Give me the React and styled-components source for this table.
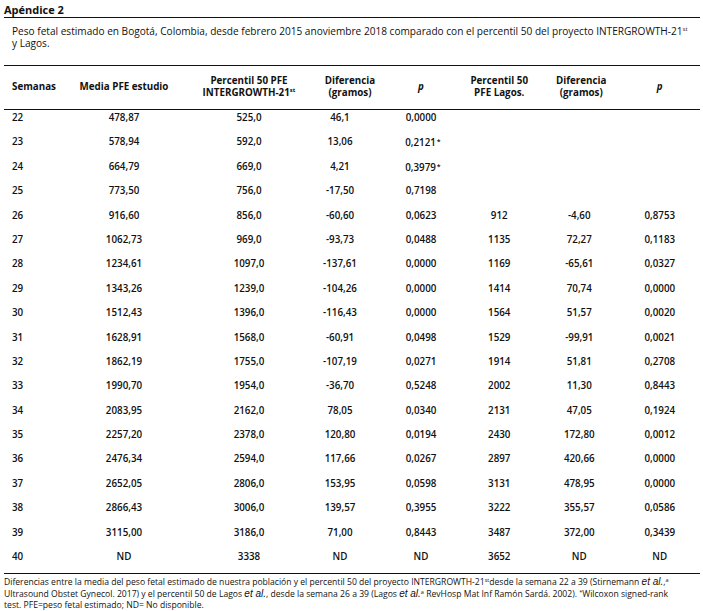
import styled, { createGlobalStyle } from 'styled-components'

const GlobalStyle = createGlobalStyle`
  body {
    margin: 0;
    background: #fff;
    font-family: "Open Sans", "Liberation Sans", sans-serif;
    color: #111;
  }
`

const COLS = '45.5px 149px 101px 83px 77px 79.5px 80.5px 80.5px'

const Page = styled.div`
  width: 696px;
  margin-left: 4px;
`

const Title = styled.h2`
  margin: 0;
  padding-top: 3px;
  font-size: 11px;
  line-height: 14px;
  font-weight: 700;
  border-bottom: 1.5px solid #111;
`

const Caption = styled.p`
  margin: 7px 0 15.5px 8px;
  font-size: 10.1px;
  line-height: 12px;
  font-weight: 500;

  sup {
    font-size: 6px;
    vertical-align: 4px;
    line-height: 0;
  }
`

const Table = styled.div`
  border-top: 1.5px solid #111;
  border-bottom: 1.5px solid #111;
`

const HeadRow = styled.div`
  display: grid;
  grid-template-columns: ${COLS};
  align-items: center;
  height: 43.5px;
  border-bottom: 1.5px solid #111;
`

const HeadCell = styled.div`
  font-size: 9.8px;
  line-height: 12px;
  font-weight: 700;
  white-space: nowrap;
  text-align: ${p => (p.$left ? 'left' : 'center')};
  padding-left: ${p => (p.$left ? 8 : p.$shift > 0 ? p.$shift * 2 : 0)}px;
  font-style: ${p => (p.$italic ? 'italic' : 'normal')};

  sup {
    font-size: 6px;
    vertical-align: 4px;
    line-height: 0;
  }
`

const Row = styled.div`
  display: grid;
  grid-template-columns: ${COLS};
  height: 24.4px;
  padding-top: 2px;
  box-sizing: border-box;
`

const Cell = styled.div`
  font-size: 9.8px;
  line-height: 12px;
  font-weight: 600;
  white-space: nowrap;
  text-align: ${p => (p.$left ? 'left' : 'center')};
  padding-left: ${p => (p.$left ? 8 : 0)}px;
  padding-right: ${p => (p.$shift ? p.$shift * 2 : 0)}px;
`

const Star = styled.span`
  display: inline-block;
  width: 0;
  font-size: 7px;
  vertical-align: 2px;
  padding-left: 1px;
`

const Footnote = styled.p`
  margin: 3px 0 0 0;
  font-size: 8.6px;
  line-height: 11.3px;
  font-weight: 500;

  sup {
    font-size: 5.5px;
    vertical-align: 3px;
    line-height: 0;
  }

  em {
    font-family: "Liberation Sans", sans-serif;
    font-size: 10px;
    font-style: italic;
    line-height: 10px;
  }
`

const rows = [
  ['22', '478,87', '525,0', '46,1', '0,0000', '', '', ''],
  ['23', '578,94', '592,0', '13,06', '0,2121*', '', '', ''],
  ['24', '664,79', '669,0', '4,21', '0,3979*', '', '', ''],
  ['25', '773,50', '756,0', '-17,50', '0,7198', '', '', ''],
  ['26', '916,60', '856,0', '-60,60', '0,0623', '912', '-4,60', '0,8753'],
  ['27', '1062,73', '969,0', '-93,73', '0,0488', '1135', '72,27', '0,1183'],
  ['28', '1234,61', '1097,0', '-137,61', '0,0000', '1169', '-65,61', '0,0327'],
  ['29', '1343,26', '1239,0', '-104,26', '0,0000', '1414', '70,74', '0,0000'],
  ['30', '1512,43', '1396,0', '-116,43', '0,0000', '1564', '51,57', '0,0020'],
  ['31', '1628,91', '1568,0', '-60,91', '0,0498', '1529', '-99,91', '0,0021'],
  ['32', '1862,19', '1755,0', '-107,19', '0,0271', '1914', '51,81', '0,2708'],
  ['33', '1990,70', '1954,0', '-36,70', '0,5248', '2002', '11,30', '0,8443'],
  ['34', '2083,95', '2162,0', '78,05', '0,0340', '2131', '47,05', '0,1924'],
  ['35', '2257,20', '2378,0', '120,80', '0,0194', '2430', '172,80', '0,0012'],
  ['36', '2476,34', '2594,0', '117,66', '0,0267', '2897', '420,66', '0,0000'],
  ['37', '2652,05', '2806,0', '153,95', '0,0598', '3131', '478,95', '0,0000'],
  ['38', '2866,43', '3006,0', '139,57', '0,3955', '3222', '355,57', '0,0586'],
  ['39', '3115,00', '3186,0', '71,00', '0,8443', '3487', '372,00', '0,3439'],
  ['40', 'ND', '3338', 'ND', 'ND', '3652', 'ND', 'ND'],
]

function Value({ text }) {
  if (text.endsWith('*')) {
    return <>{text.slice(0, -1)}<Star>*</Star></>
  }
  return text
}

export default function App() {
  return (
    <Page>
      <GlobalStyle />
      <Title>Apéndice 2</Title>
      <Caption>
        Peso fetal estimado en Bogotá, Colombia, desde febrero 2015 anoviembre 2018 comparado con el percentil 50 del proyecto INTERGROWTH-21<sup>st</sup>
        <br />y Lagos.
      </Caption>

      <Table>
        <HeadRow>
          <HeadCell $left>Semanas</HeadCell>
          <HeadCell>Media PFE estudio</HeadCell>
          <HeadCell>Percentil 50 PFE<br />INTERGROWTH-21<sup>st</sup></HeadCell>
          <HeadCell $shift={9}>Diferencia<br />(gramos)</HeadCell>
          <HeadCell $italic>p</HeadCell>
          <HeadCell>Percentil 50<br />PFE Lagos.</HeadCell>
          <HeadCell $shift={2}>Diferencia<br />(gramos)</HeadCell>
          <HeadCell $italic>p</HeadCell>
        </HeadRow>

        {rows.map(r => (
          <Row key={r[0]}>
            {r.map((v, i) => (
              <Cell key={i} $left={i === 0} $shift={i === 3 ? 1 : 0}>
                <Value text={v} />
              </Cell>
            ))}
          </Row>
        ))}
      </Table>

      <Footnote>
        Diferencias entre la media del peso fetal estimado de nuestra población y el percentil 50 del proyecto INTERGROWTH-21<sup>st</sup>desde la semana 22 a 39 (Stirnemann <em>et al.</em>,<sup>a</sup>
        <br />Ultrasound Obstet Gynecol. 2017) y el percentil 50 de Lagos <em>et al.</em>, desde la semana 26 a 39 (Lagos <em>et al.</em><sup>a</sup> RevHosp Mat Inf Ramón Sardá. 2002). <sup>*</sup>Wilcoxon signed-rank
        <br />test. PFE=peso fetal estimado; ND= No disponible.
      </Footnote>
    </Page>
  )
}
